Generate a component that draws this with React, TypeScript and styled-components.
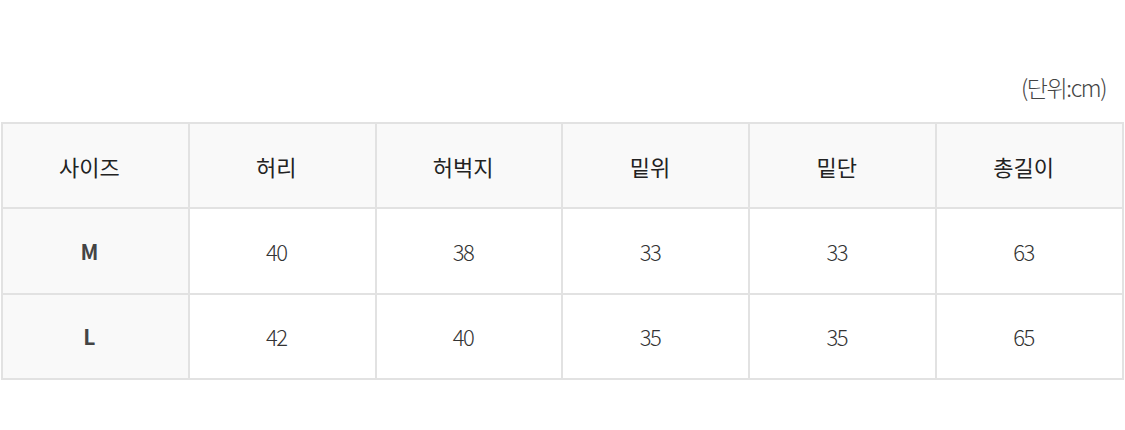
import styled, { createGlobalStyle } from 'styled-components'

const GlobalStyle = createGlobalStyle`
	html, body {
		margin: 0;
		padding: 0;
		background: #fff;
	}
	body {
		font-family: 'Noto Sans CJK KR', 'Noto Sans', sans-serif;
		color: #333;
	}
`

const Wrapper = styled.div`
	width: 1125px;
	padding: 69px 0 0 1px;
	box-sizing: border-box;
`

const Unit = styled.div`
	text-align: right;
	padding-right: 19px;
	font-size: 23px;
	font-weight: 300;
	letter-spacing: -1.4px;
	color: #444;
	line-height: 36px;
	margin-bottom: 17px;
`

const Table = styled.table`
	width: 1123px;
	border-collapse: collapse;
	table-layout: fixed;
	border: 2px solid #e2e2e2;
`

const Cell = styled.td<{ $head?: boolean; $label?: boolean }>`
	height: 83.4px;
	padding: 0 12px 0 0;
	border: 2px solid #e2e2e2;
	text-align: center;
	vertical-align: middle;
	background: ${(p) => (p.$head || p.$label ? '#f9f9f9' : '#fff')};
	font-size: ${(p) => (p.$label ? '21px' : '22px')};
	font-weight: ${(p) => (p.$label ? 700 : p.$head ? 400 : 300)};
	letter-spacing: ${(p) => (p.$head || p.$label ? '0' : '-1.5px')};
	color: ${(p) => (p.$label ? '#444' : p.$head ? '#222' : '#333')};
`

const headers = ['사이즈', '허리', '허벅지', '밑위', '밑단', '총길이']
const rows = [
	['M', '40', '38', '33', '33', '63'],
	['L', '42', '40', '35', '35', '65'],
]

const App = () => {
	return (
		<>
			<GlobalStyle />
			<Wrapper>
				<Unit>(단위:cm)</Unit>
				<Table>
					<tbody>
						<tr>
							{headers.map((h) => (
								<Cell as="th" $head key={h}>
									{h}
								</Cell>
							))}
						</tr>
						{rows.map((r) => (
							<tr key={r[0]}>
								{r.map((v, i) => (
									<Cell key={i} $label={i === 0}>
										{v}
									</Cell>
								))}
							</tr>
						))}
					</tbody>
				</Table>
			</Wrapper>
		</>
	)
}

export default App
